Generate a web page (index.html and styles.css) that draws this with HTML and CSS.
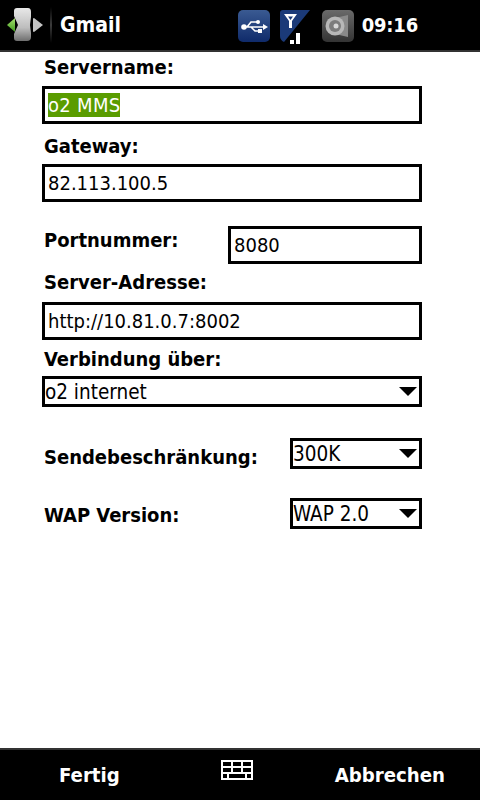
FILE: index.html
```html
<!DOCTYPE html>
<html lang="de">
<head>
  <meta charset="UTF-8" />
  <title>Gmail</title>
  <link rel="stylesheet" href="styles.css">
</head>
<body>
  <div class="phone">
    <div class="topbar">
      <svg class="start" width="36" height="33" viewBox="0 0 36 33">
        <defs>
          <linearGradient id="chip" x1="0" y1="0" x2="0" y2="1">
            <stop offset="0" stop-color="#e8e8e8"/>
            <stop offset="0.6" stop-color="#bdbdbd"/>
            <stop offset="1" stop-color="#6e6e6e"/>
          </linearGradient>
          <linearGradient id="grn" x1="0" y1="0" x2="0" y2="1">
            <stop offset="0" stop-color="#a6e070"/>
            <stop offset="1" stop-color="#3f9a1c"/>
          </linearGradient>
        </defs>
        <path d="M7 3 Q7 0 10 0 H21 Q24 0 24 4 V9 L23 17 L24 25 V29 Q24 33 20 33 H10 Q7 33 7 30 V26 L11 17 L7 8 Z" fill="url(#chip)"/>
        <path d="M0 17 L8 10 V24 Z" fill="url(#grn)"/>
        <path d="M26 11 Q26 10 27 10 L36 17 L27 24 Q26 24 26 23 Z" fill="#c4c4c4"/>
      </svg>
      <div class="divider"></div>
      <div class="title">Gmail</div>
      <div class="tray">
        <div class="tile usb">
          <svg width="32" height="32" viewBox="0 0 32 32">
            <path d="M4 17 H26 M9 17 L13 12 H19 M13 17 L17 21 H21" fill="none" stroke="#fff" stroke-width="1.6"/>
            <circle cx="6" cy="17" r="2.8" fill="#fff"/>
            <circle cx="20" cy="12" r="2" fill="#fff"/>
            <rect x="20" y="19" width="4" height="4" fill="#fff"/>
            <path d="M25 14 L30 17 L25 20 Z" fill="#fff"/>
          </svg>
        </div>
        <svg class="signal" width="32" height="34" viewBox="0 0 32 34">
          <path d="M3 0 H30 L4 32 Q0 30 0 26 V3 Q0 0 3 0 Z" fill="#1b3a78"/>
          <path d="M4 4 H17 L12 11 V18 H9 V11 Z" fill="#fff"/>
          <path d="M8 6.5 H13 L10.5 10 Z" fill="#1b3a78"/>
          <rect x="10" y="30" width="4" height="4" fill="#fff"/>
          <rect x="16" y="23" width="4" height="11" fill="#fff"/>
        </svg>
        <div class="tile speaker">
          <svg width="32" height="32" viewBox="0 0 32 32">
            <path d="M13 8 L26 5 V27 L13 24 Z" fill="#8a8a8a"/>
            <circle cx="13" cy="16" r="9.5" fill="#b8b8b8"/>
            <circle cx="13" cy="16" r="6" fill="#7c7c7c"/>
            <circle cx="14" cy="16" r="2.5" fill="#d8d8d8"/>
          </svg>
        </div>
        <div class="clock">09:16</div>
      </div>
    </div>

    <form class="form">
      <div class="label label-first">Servername:</div>
      <div class="input"><span class="selected">o2 MMS</span></div>

      <div class="label label-gateway">Gateway:</div>
      <div class="input">82.113.100.5</div>

      <div class="row row-port">
        <div class="label label-port">Portnummer:</div>
        <div class="input input-port">8080</div>
      </div>

      <div class="label label-server">Server-Adresse:</div>
      <div class="input">http://10.81.0.7:8002</div>

      <div class="label label-via">Verbindung über:</div>
      <div class="select">
        <span>o2 internet</span>
        <span class="arrow"></span>
      </div>

      <div class="row row-limit">
        <div class="label label-limit">Sendebeschränkung:</div>
        <div class="select select-small">
          <span>300K</span>
          <span class="arrow"></span>
        </div>
      </div>

      <div class="row row-wap">
        <div class="label label-wap">WAP Version:</div>
        <div class="select select-small">
          <span>WAP 2.0</span>
          <span class="arrow"></span>
        </div>
      </div>
    </form>

    <div class="softbar">
      <div class="softkey">Fertig</div>
      <svg class="keyboard" width="32" height="20" viewBox="0 0 32 20">
        <path d="M1 1 H31 V19 H1 Z M1 7 H31 M1 13 H31 M11 1 V13 M21 1 V13 M7 13 V19 M25 13 V19" fill="none" stroke="#fff" stroke-width="2"/>
      </svg>
      <div class="softkey">Abbrechen</div>
    </div>
  </div>
</body>
</html>
```

FILE: styles.css
```css
body {
  margin: 0;
  background: #fff;
  font-family: "DejaVu Sans Condensed", "DejaVu Sans", sans-serif;
  font-stretch: condensed;
  color: #000;
}
.phone {
  width: 480px;
  height: 800px;
  display: flex;
  flex-direction: column;
  overflow: hidden;
}
.topbar {
  height: 50px;
  flex: none;
  background: #000;
  border-bottom: 2px solid #333;
  display: flex;
  align-items: center;
  color: #fff;
  font-weight: 700;
}
.start {
  margin-left: 7px;
  margin-top: -1px;
}
.divider {
  width: 2px;
  height: 36px;
  margin-left: 7px;
  background: linear-gradient(#000, #3c3c3c 50%, #000);
}
.title {
  font-size: 21px;
  margin-left: 8px;
}
.tray {
  margin-left: auto;
  display: flex;
  align-items: center;
  margin-right: 62px;
}
.tile {
  width: 32px;
  height: 32px;
  margin-top: 2px;
  border-radius: 5px;
}
.usb {
  background: linear-gradient(#3a5a92, #0f2a6a);
}
.signal {
  margin-left: 10px;
  margin-top: 4px;
}
.speaker {
  margin-left: 10px;
  background: linear-gradient(#6a6a6a, #333);
}
.clock {
  font-size: 20px;
  letter-spacing: -0.2px;
  margin-left: 8px;
}
.form {
  flex: 1;
  padding: 0 58px 0 42px;
}
.label {
  font-size: 20px;
  font-weight: 700;
  line-height: 26px;
  margin-left: 2px;
}
.label-first { margin-top: 2px; margin-bottom: 6px; }
.label-gateway { margin-top: 9px; margin-bottom: 5px; }
.label-server { margin-top: 5px; margin-bottom: 7px; }
.label-via { margin-top: 6px; margin-bottom: 4px; }
.label-port { margin-bottom: 11px; }
.label-limit { margin-top: 7px; line-height: 24px; }
.label-wap { margin-top: 3px; }
.input {
  height: 38px;
  box-sizing: border-box;
  border: 3px solid #000;
  padding-left: 3px;
  font-size: 20px;
  line-height: 32px;
  white-space: nowrap;
}
.selected {
  display: inline-block;
  background: #5a9c00;
  color: #fff;
  line-height: 24px;
  letter-spacing: 0.3px;
}
.row {
  display: flex;
  align-items: center;
  justify-content: space-between;
}
.row-port { margin-top: 24px; }
.row-limit { margin-top: 31px; }
.row-wap { margin-top: 29px; }
.input-port {
  width: 194px;
}
.select {
  height: 31px;
  box-sizing: border-box;
  border: 3px solid #000;
  padding: 2px 2px 0 0;
  font-size: 20.5px;
  line-height: 25px;
  display: flex;
  align-items: center;
  justify-content: space-between;
  white-space: nowrap;
}
.select-small {
  width: 132px;
}
.arrow {
  width: 0;
  height: 0;
  margin-top: -2px;
  border-left: 9px solid transparent;
  border-right: 9px solid transparent;
  border-top: 9px solid #000;
}
.softbar {
  height: 50px;
  flex: none;
  background: #000;
  border-top: 2px solid #333;
  display: flex;
  align-items: center;
  justify-content: space-between;
  color: #fff;
  font-weight: 700;
  font-size: 20.2px;
}
.softkey:first-child { margin-left: 59px; }
.softkey:last-child { margin-right: 35px; }
.keyboard {
  margin-bottom: 10px;
  margin-left: 20px;
}
```
